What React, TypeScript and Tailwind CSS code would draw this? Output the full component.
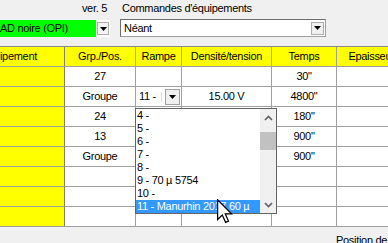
type Row = { grp?: string; combo?: boolean; dens?: string; temps?: string };

const rows: Row[] = [
  { grp: '27', temps: '30"' },
  { grp: 'Groupe', combo: true, dens: '15.00 V', temps: '4800"' },
  { grp: '24', temps: '180"' },
  { grp: '13', temps: '900"' },
  { grp: 'Groupe', temps: '900"' },
  {},
  {},
  {},
];

const items = ['4 -', '5 -', '6 -', '7 -', '8 -', '9 - 70 µ 5754', '10 -', '11 - Manurhin 2017 60 µ'];

function DownTri() {
  return (
    <svg width="7" height="4" viewBox="0 0 7 4">
      <path d="M0 0H7L3.5 4Z" fill="#000" />
    </svg>
  );
}

function Chevron({ up }: { up?: boolean }) {
  return (
    <svg width="9" height="6" viewBox="0 0 9 6">
      <path
        d={up ? 'M1 5L4.5 1.5L8 5' : 'M1 1L4.5 4.5L8 1'}
        fill="none"
        stroke="#606060"
        strokeWidth="1.6"
      />
    </svg>
  );
}

function RampeCombo() {
  return (
    <div className="flex h-full w-full items-center">
      <span className="pl-[3px]">11 -</span>
      <span className="ml-[5px] h-[10px] w-[1px] bg-[#f5dc8c]" />
      <div className="ml-auto mr-[1px] flex h-[16px] w-[15px] items-center justify-center border border-[#a0a0a0] bg-[#f0f0f0]">
        <DownTri />
      </div>
    </div>
  );
}

const cell = 'flex h-[20px] shrink-0 items-center justify-center overflow-hidden whitespace-nowrap border-b border-r border-[#a0a0a0]';

export default function App() {
  return (
    <div className="relative h-[243px] w-[388px] overflow-hidden bg-[#f0f0f0] font-['Liberation_Sans',Arial,sans-serif] text-[11px] leading-[13px] tracking-[-0.3px] text-black">
      {/* labels */}
      <div className="flex h-[19px] pt-[2px]">
        <div className="w-[107px] text-right">ver. 5</div>
        <div className="ml-[15px]">Commandes d'équipements</div>
      </div>

      {/* combos */}
      <div className="flex h-[18px]">
        <div className="mt-[1px] flex h-[17px] w-[110px] bg-white">
          <div className="flex flex-1 items-center bg-[#00ff00]">AD noire (OPI)</div>
          <div className="flex w-[14px] items-center justify-center">
            <div className="flex h-[13px] w-[12px] items-center justify-center border border-[#adadad] bg-[#f4f4f4]">
              <DownTri />
            </div>
          </div>
        </div>
        <div className="ml-[10px] flex h-[18px] w-[206px] items-center border border-[#a0a0a0] border-l-[#6d6d6d] border-t-[#6d6d6d] bg-white">
          <span className="pl-[3px]">Néant</span>
          <div className="ml-auto mr-[1px] flex h-[13px] w-[13px] items-center justify-center border border-[#adadad] bg-[#f0f0f0]">
            <DownTri />
          </div>
        </div>
      </div>

      {/* table */}
      <div className="mt-[9px] border-t border-[#8a8a8a]">
        <div className="flex bg-[#ffff00]">
          <div className={`${cell} w-[65px] justify-end border-r-[#7f7f7f] pr-[27px]`}>Equipement</div>
          <div className={`${cell} w-[71px]`}>Grp./Pos.</div>
          <div className={`${cell} w-[46px]`}>Rampe</div>
          <div className={`${cell} w-[90px]`}>Densité/tension</div>
          <div className={`${cell} w-[65px]`}>Temps</div>
          <div className={`${cell} w-[70px]`}>Epaisseur</div>
        </div>
        {rows.map((r, i) => (
          <div key={i} className="flex">
            <div className={`${cell} w-[65px] border-r-[#7f7f7f] bg-[#ffff00]`} />
            <div className={`${cell} w-[71px] bg-white`}>{r.grp}</div>
            <div className={`${cell} w-[46px] bg-white`}>{r.combo && <RampeCombo />}</div>
            <div className={`${cell} w-[90px] bg-white`}>{r.dens}</div>
            <div className={`${cell} w-[65px] bg-white`}>{r.temps}</div>
            <div className={`${cell} w-[70px] bg-white`} />
          </div>
        ))}
      </div>

      <div className="ml-[336px] mt-[7px] whitespace-nowrap">Position de</div>

      {/* open rampe list */}
      <div className="absolute left-[135px] top-[108px] flex h-[106px] w-[142px] border border-[#646464] bg-white">
        <div className="flex flex-1 flex-col">
          {items.map((it, i) => (
            <div
              key={it}
              className={`h-[13px] overflow-hidden whitespace-nowrap pl-[1px] ${
                i === items.length - 1 ? 'bg-[#3399ff] text-white' : ''
              }`}
            >
              {it}
            </div>
          ))}
        </div>
        <div className="flex w-[16px] flex-col bg-[#f0f0f0]">
          <div className="flex h-[17px] items-center justify-center">
            <Chevron up />
          </div>
          <div className="mt-[6px] h-[18px] bg-[#c1c1c1]" />
          <div className="mt-auto flex h-[17px] items-center justify-center">
            <Chevron />
          </div>
        </div>
      </div>

      {/* mouse pointer */}
      <svg className="absolute left-[217px] top-[199px]" width="16" height="25" viewBox="0 0 13 20">
        <path
          d="M0.5 0.5L0.5 16.5L4.3 12.8L7 18.8L9.3 17.8L6.7 11.9L11.8 11.9Z"
          fill="#fff"
          stroke="#000"
          strokeWidth="1"
          strokeLinejoin="miter"
        />
      </svg>
    </div>
  );
}
